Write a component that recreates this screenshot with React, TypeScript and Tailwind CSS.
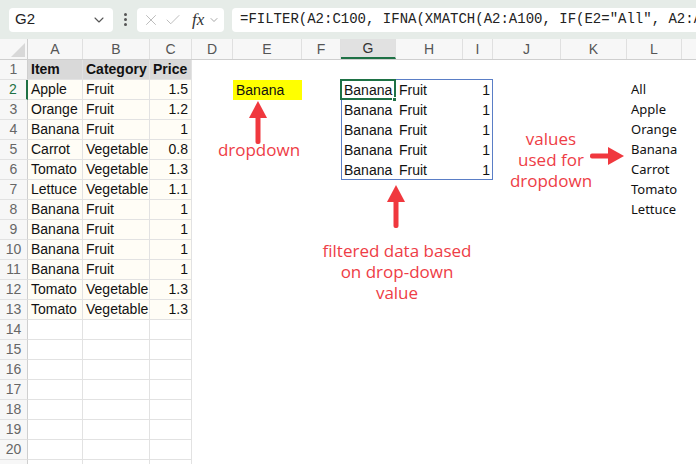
import { Check, ChevronDown, X } from "lucide-react";

type Cell = { t: string; bold?: boolean; right?: boolean; bg?: string };

const cols = [
  { k: "A", w: "w-[55px]", grid: true },
  { k: "B", w: "w-[67px]", grid: true },
  { k: "C", w: "w-[42px]", grid: true },
  { k: "D", w: "w-[41px]" },
  { k: "E", w: "w-[69px]" },
  { k: "F", w: "w-[39px]" },
  { k: "G", w: "w-[55px]" },
  { k: "H", w: "w-[67px]" },
  { k: "I", w: "w-[30px]" },
  { k: "J", w: "w-[68px]" },
  { k: "K", w: "w-[66px]" },
  { k: "L", w: "w-[55px]" },
  { k: "M", w: "w-[60px]" },
];

const source: [string, string, string][] = [
  ["Apple", "Fruit", "1.5"],
  ["Orange", "Fruit", "1.2"],
  ["Banana", "Fruit", "1"],
  ["Carrot", "Vegetable", "0.8"],
  ["Tomato", "Vegetable", "1.3"],
  ["Lettuce", "Vegetable", "1.1"],
  ["Banana", "Fruit", "1"],
  ["Banana", "Fruit", "1"],
  ["Banana", "Fruit", "1"],
  ["Banana", "Fruit", "1"],
  ["Tomato", "Vegetable", "1.3"],
  ["Tomato", "Vegetable", "1.3"],
];

const lookup = ["All", "Apple", "Orange", "Banana", "Carrot", "Tomato", "Lettuce"];

const cells: Record<string, Cell> = {
  A1: { t: "Item", bold: true },
  B1: { t: "Category", bold: true },
  C1: { t: "Price", bold: true },
  E2: { t: "Banana", bg: "bg-[#ffff00]" },
};
source.forEach((r, i) => {
  cells[`A${i + 2}`] = { t: r[0] };
  cells[`B${i + 2}`] = { t: r[1] };
  cells[`C${i + 2}`] = { t: r[2], right: true };
});
for (let r = 2; r <= 6; r++) {
  cells[`G${r}`] = { t: "Banana" };
  cells[`H${r}`] = { t: "Fruit" };
  cells[`I${r}`] = { t: "1", right: true };
}

const rows = Array.from({ length: 20 }, (_, i) => i + 1);

function Toolbar() {
  return (
    <div className="h-[39px] bg-[#e6ece8] flex items-center pl-[9px]">
      <div className="w-[104px] h-[24px] bg-white rounded-[4px] flex items-center justify-between pl-[6px] pr-[6px]">
        <span className="text-[15px] text-[#222]">G2</span>
        <ChevronDown className="w-[16px] h-[16px] text-[#555]" strokeWidth={1.6} />
      </div>
      <div className="w-[24px] flex flex-col items-center gap-[2px]">
        <span className="w-[3px] h-[3px] rounded-full bg-[#555]" />
        <span className="w-[3px] h-[3px] rounded-full bg-[#555]" />
        <span className="w-[3px] h-[3px] rounded-full bg-[#555]" />
      </div>
      <div className="w-[87px] h-[24px] bg-white rounded-[4px] flex items-center pl-[5px] gap-[4px]">
        <X className="w-[18px] h-[18px] text-[#b5b5b5]" strokeWidth={1.2} />
        <Check className="w-[18px] h-[18px] text-[#b5b5b5]" strokeWidth={1.2} />
        <span className="ml-[6px] italic text-[17px] text-[#333] font-['Liberation_Serif',serif]">fx</span>
        <ChevronDown className="w-[12px] h-[12px] text-[#888]" strokeWidth={1.5} />
      </div>
      <div className="ml-[8px] flex-1 min-w-0 h-[24px] bg-white rounded-l-[4px] flex items-center pl-[8px] overflow-hidden whitespace-nowrap">
        <span className="font-['Liberation_Mono',monospace] text-[14px] text-[#222]">
          =FILTER(A2:C100, IFNA(XMATCH(A2:A100, IF(E2="All", A2:A100, E2)), 0))
        </span>
      </div>
    </div>
  );
}

function HeaderRow() {
  return (
    <div className="flex h-[21px] bg-[#f7f7f7] border-b border-[#cfcfcf]">
      <div className="w-[28px] shrink-0 border-r border-[#cfcfcf] relative overflow-hidden">
        <div className="absolute right-[2px] bottom-[2px] w-0 h-0 border-l-[14px] border-l-transparent border-b-[14px] border-b-[#d8d8d8]" />
      </div>
      {cols.map((c) => (
        <div
          key={c.k}
          className={`${c.w} shrink-0 flex items-center justify-center text-[14px] border-r border-[#e0e0e0] ${
            c.k === "G" ? "bg-[#e1e1e1] text-[#333] border-b-2 border-b-[#1e7145]" : "text-[#555]"
          }`}
        >
          {c.k === "M" ? "" : c.k}
        </div>
      ))}
    </div>
  );
}

function SheetRow({ r }: { r: number }) {
  return (
    <div className="flex h-[20px]">
      <div
        className={`w-[28px] shrink-0 bg-[#f7f7f7] flex items-center justify-center text-[14px] border-b border-[#e2e2e2] ${
          r === 2 ? "text-[#1e7145] border-r-2 border-r-[#1e7145]" : "text-[#666] border-r border-r-[#cfcfcf]"
        }`}
      >
        {r}
      </div>
      {cols.map((c) => {
        const cell = cells[`${c.k}${r}`];
        const fill = cell?.bg
          ? cell.bg
          : r === 1 && c.grid
          ? "bg-[#d9d9d9]"
          : c.grid && r <= 13
          ? "bg-[#fffdf6]"
          : "bg-white";
        return (
          <div
            key={c.k}
            className={`${c.w} shrink-0 flex items-center px-[3px] text-[14px] text-[#111] whitespace-nowrap ${fill} ${
              c.grid ? "border-r border-b border-[#e2e2e2]" : ""
            } ${cell?.right ? "justify-end" : ""} ${cell?.bold ? "font-bold" : ""}`}
          >
            {cell?.t}
          </div>
        );
      })}
    </div>
  );
}

function UpArrow({ className }: { className: string }) {
  return (
    <svg className={className} width="20" height="44" viewBox="0 0 20 44">
      <polygon points="10,0 19,17 1,17" fill="#f0383e" />
      <rect x="7.5" y="14" width="5" height="29" rx="2" fill="#f0383e" />
    </svg>
  );
}

export default function App() {
  return (
    <div className="relative w-[696px] h-[464px] overflow-hidden bg-white font-['Liberation_Sans',Arial,sans-serif]">
      <Toolbar />
      <HeaderRow />
      {rows.map((r) => (
        <SheetRow key={r} r={r} />
      ))}
      <div className="flex h-[20px]">
        <div className="w-[28px] shrink-0 bg-[#f7f7f7] border-r border-[#cfcfcf]" />
        <div className="w-[55px] shrink-0 border-r border-[#e2e2e2]" />
        <div className="w-[67px] shrink-0 border-r border-[#e2e2e2]" />
        <div className="w-[42px] shrink-0 border-r border-[#e2e2e2]" />
      </div>

      {/* lookup list in column L */}
      <div className="absolute left-[631px] top-[80px] flex flex-col font-['Noto_Sans',sans-serif] text-[13px] text-[#111]">
        {lookup.map((v) => (
          <div key={v} className="h-[20px] flex items-center">
            {v}
          </div>
        ))}
      </div>

      {/* spill range + active cell */}
      <div className="absolute left-[341px] top-[79px] w-[152px] h-[101px] border border-[#5a7ec6]" />
      <div className="absolute left-[340px] top-[79px] w-[56px] h-[21px] border-2 border-[#1e7145]" />
      <div className="absolute left-[392px] top-[97px] w-[5px] h-[5px] bg-[#1e7145] border border-white" />

      {/* annotations */}
      <UpArrow className="absolute left-[248px] top-[101px]" />
      <div className="absolute left-[200px] top-[139px] w-[118px] text-center font-['Open_Sans',sans-serif] text-[17px] leading-[21px] text-[#ee3d46]">
        dropdown
      </div>

      <UpArrow className="absolute left-[386px] top-[185px]" />
      <div className="absolute left-[300px] top-[240px] w-[194px] text-center font-['Open_Sans',sans-serif] text-[17px] leading-[21px] text-[#ee3d46]">
        filtered data based
        <br />
        on drop-down
        <br />
        value
      </div>

      <div className="absolute left-[495px] top-[128px] w-[112px] text-center font-['Open_Sans',sans-serif] text-[17px] leading-[21px] text-[#ee3d46]">
        values
        <br />
        used for
        <br />
        dropdown
      </div>
      <svg className="absolute left-[589px] top-[146px]" width="36" height="20" viewBox="0 0 36 20">
        <rect x="1" y="7.5" width="22" height="5" rx="2" fill="#f0383e" />
        <polygon points="35,10 19,1 19,19" fill="#f0383e" />
      </svg>
    </div>
  );
}
